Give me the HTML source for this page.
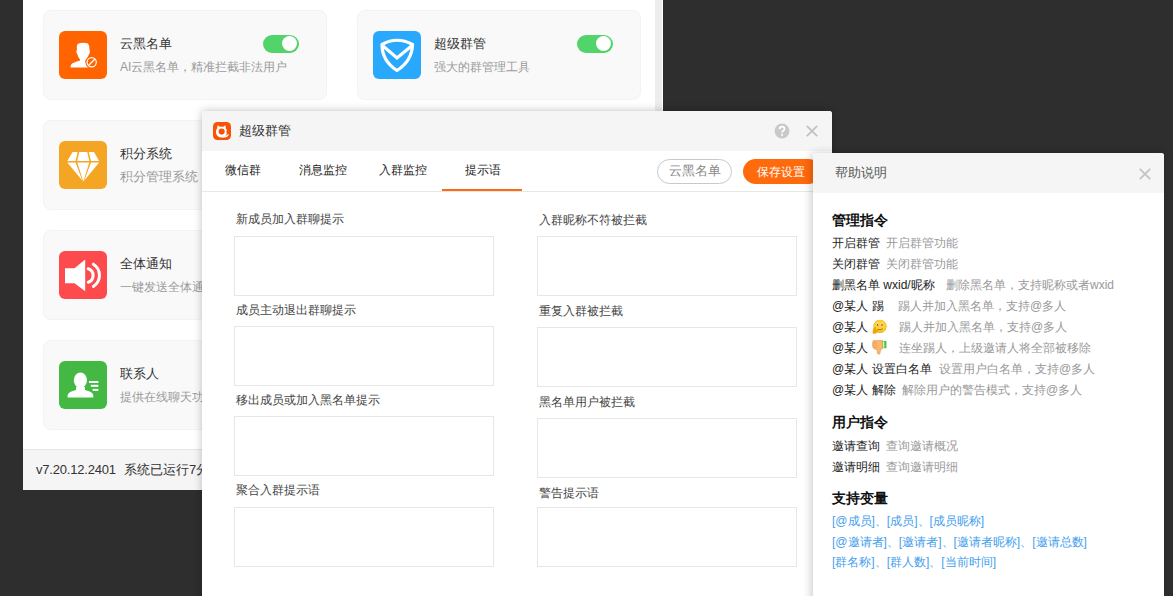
<!DOCTYPE html>
<html><head><meta charset="utf-8">
<style>
*{box-sizing:border-box;margin:0;padding:0}
html,body{width:1173px;height:596px;overflow:hidden}
body{background:#2e2e2e;font-family:"Liberation Sans",sans-serif;position:relative;color:#333}
.abs{position:absolute}
#main{left:23px;top:0;width:640px;height:490px;background:#fff}
#scroll{left:655px;top:0;width:7px;height:449px;background:#eeedeb}
#footer{left:23px;top:449px;width:640px;height:41px;background:#f5f5f5;border-top:1px solid #e6e6e6;font-size:13px;color:#333;padding-left:13px;line-height:40px;white-space:nowrap}
.card{position:absolute;width:284px;height:90px;background:#f9f9f9;border-radius:8px;border:1px solid #f3f3f3}
.card .ic{position:absolute;left:15px;top:20px;width:48px;height:48px;border-radius:6px}
.card .t{position:absolute;left:76px;top:23px;font-size:13px;color:#333;white-space:nowrap;line-height:20px}
.card .s{position:absolute;left:76px;top:47px;font-size:12px;color:#999;white-space:nowrap;line-height:18px}
.tg{position:absolute;left:219px;top:23.7px;width:36px;height:18px;border-radius:9px;background:#52d46a}
.tg:after{content:"";position:absolute;right:2.2px;top:1.5px;width:15px;height:15px;border-radius:50%;background:#fff}
#dlg{left:202px;top:111px;width:630px;height:500px;background:#fff;box-shadow:0 0 8px rgba(0,0,0,.25);border-radius:3px 3px 0 0}
#dtitle{left:0;top:0;width:630px;height:40px;background:#f5f5f5;border-radius:3px 3px 0 0}
#tabs{left:0;top:40px;width:630px;height:41px;border-bottom:1px solid #e8e8e8}
.tab{position:absolute;top:0;width:80px;height:40px;line-height:39px;text-align:center;font-size:12px;color:#1e1e1e}
.lbl{position:absolute;font-size:12px;color:#444;white-space:nowrap;line-height:16px}
.ta{position:absolute;width:260px;height:60px;border:1px solid #e6e6e6;background:#fff}
#help{left:813px;top:153px;width:351px;height:460px;background:#fff;box-shadow:-2px 0 8px rgba(0,0,0,.2);border-radius:3px 3px 0 0}
#hhead{left:0;top:0;width:351px;height:40px;border-radius:3px 3px 0 0;background:#f5f5f5;font-size:13px;color:#555;line-height:40px;padding-left:22px}
.hl{position:absolute;left:19px;font-size:12px;white-space:nowrap;line-height:16px;color:#222}
.hl i{font-style:normal;color:#999;position:absolute;top:0}
.hl{font-weight:500;margin-top:1px}
.hh{position:absolute;left:19px;font-size:14px;font-weight:bold;white-space:nowrap;line-height:18px;color:#111}
.bl{position:absolute;left:19px;font-size:12px;white-space:nowrap;line-height:16px;color:#45a0ee}
</style></head><body>
<div id="main" class="abs"></div>
<div id="scroll" class="abs"></div>
<div id="footer" class="abs"><span style="position:absolute;left:13px;letter-spacing:-0.2px">v7.20.12.2401</span><span style="position:absolute;left:101px">系统已运行7分钟</span></div>

<!-- cards -->
<div class="card" style="left:43px;top:10px">
  <div class="ic" style="background:#ff6400"><svg width="48" height="48" viewBox="0 0 48 48"><path d="M18.5,13 Q23.5,11 29,12.5 Q31,15 30.5,19 Q31.5,20 30.5,22.5 Q29.5,24 29,25.5 Q28,28 26.5,29 L26.5,31 Q28,32 29.5,33 L29.5,36.5 L11.5,36.5 Q11.5,33.5 13,32.5 Q17,30.5 21,29.5 L21,28.5 Q19,26.5 18.5,23.5 Q17.5,22.5 17.3,20.5 Q17.3,19 18,19 Q17.5,15 18.5,13 Z" fill="#fff"/><circle cx="32.7" cy="31.3" r="6.3" fill="#ff6400"/><circle cx="32.7" cy="31.3" r="4.6" fill="none" stroke="#fff" stroke-width="1.2"/><path d="M29.5,34.5 L36,28" stroke="#fff" stroke-width="1.2"/></svg></div>
  <div class="t">云黑名单</div><div class="s">AI云黑名单，精准拦截非法用户</div>
  <div class="tg"></div>
</div>
<div class="card" style="left:357px;top:10px">
  <div class="ic" style="background:#29a9fd"><svg width="48" height="48" viewBox="0 0 48 48"><path d="M9,13.5 Q24,5 39.5,13.5 Q39,30 24,39.5 Q9,30 9,13.5 Z" fill="none" stroke="#fff" stroke-width="3.2" stroke-linejoin="round"/><path d="M10,15 L24,27 L38.5,15" fill="none" stroke="#fff" stroke-width="3.2" stroke-linejoin="miter"/></svg></div>
  <div class="t">超级群管</div><div class="s">强大的群管理工具</div>
  <div class="tg"></div>
</div>
<div class="card" style="left:43px;top:120px">
  <div class="ic" style="background:#f5a524"><svg width="48" height="48" viewBox="0 0 48 48"><path d="M13.6,11 L18.6,11 L16.6,19.9 L8.3,19.9 Z M20.2,11 L28.2,11 L30.4,19.9 L18.2,19.9 Z M29.8,11 L35,11 L40.1,19.9 L32,19.9 Z M8.3,21.5 L16.6,21.5 L23.3,39.6 Z M18.3,21.5 L30.3,21.5 L24.3,40.8 Z M32,21.5 L40.1,21.5 L25.3,39.6 Z" fill="#fff"/></svg></div>
  <div class="t">积分系统</div><div class="s" style="font-size:12.5px">积分管理系统，</div>
</div>
<div class="card" style="left:43px;top:230px">
  <div class="ic" style="background:#fd4a4d"><svg width="48" height="48" viewBox="0 0 48 48"><path d="M6,17.2 L15.5,17.2 L26.2,8.6 L26.2,40.2 L15.5,32.2 L6,32.2 Z" fill="#fff"/><path d="M29.2,17.8 A7.1,7.1 0 0 1 29.2,31.3" fill="none" stroke="#fff" stroke-width="3" stroke-linecap="round"/><path d="M34.4,13.2 A13.2,13.2 0 0 1 34.4,35.4" fill="none" stroke="#fff" stroke-width="3" stroke-linecap="round"/></svg></div>
  <div class="t">全体通知</div><div class="s">一键发送全体通知</div>
</div>
<div class="card" style="left:43px;top:340px">
  <div class="ic" style="background:#43b843"><svg width="48" height="48" viewBox="0 0 48 48"><ellipse cx="21.4" cy="19.3" rx="6.6" ry="7.8" fill="#fff"/><path d="M17,26 L26,26 L26,29 Q33.5,30.5 34.3,34 L34.3,36.5 L8.6,36.5 L8.6,34 Q9.5,30.5 17,29 Z" fill="#fff"/><rect x="30" y="20" width="9.4" height="2" fill="#fff"/><rect x="31.8" y="23.8" width="7.6" height="2" fill="#fff"/><rect x="33.6" y="27.9" width="5.8" height="2" fill="#fff"/></svg></div>
  <div class="t">联系人</div><div class="s">提供在线聊天功能</div>
</div>

<!-- dialog -->
<div id="dlg" class="abs">
  <div id="dtitle" class="abs">
    <svg class="abs" style="left:11px;top:11px" width="18" height="18" viewBox="0 0 18 18"><rect width="18" height="18" rx="4.5" fill="#f95206"/><circle cx="8.5" cy="10" r="5.6" fill="#fff"/><path d="M3.9,7 L4.6,3.3 L7.6,5.2 Z M9.6,5.2 L12.4,3.3 L13,7 Z" fill="#fff"/><path d="M8.5,14.4 Q13,14.6 15.9,11.8 Q15.6,14.8 12,15.4 Q9.5,15.8 8.5,15 Z" fill="#fff"/><circle cx="8.65" cy="9.6" r="3.05" fill="#f95206"/><path d="M12.6,9.6 L14.6,9.2 L14.4,11.2 Z" fill="#f95206"/></svg>
    <div class="abs" style="left:37px;top:11px;font-size:13px;line-height:18px;color:#333">超级群管</div>
    <svg class="abs" style="left:572px;top:12px" width="16" height="16" viewBox="0 0 16 16"><circle cx="8" cy="8" r="7.4" fill="#c9c9c9"/><path d="M5.6,6.2 Q5.6,3.6 8,3.6 Q10.5,3.6 10.5,5.8 Q10.5,7.2 9,8 Q8.1,8.5 8.1,9.8" fill="none" stroke="#fff" stroke-width="1.8"/><rect x="7.1" y="10.9" width="1.9" height="1.8" fill="#fff"/></svg>
    <svg class="abs" style="left:604px;top:14px" width="12" height="12" viewBox="0 0 12 12"><path d="M0.8,0.8 L11.2,11.2 M11.2,0.8 L0.8,11.2" stroke="#c2c2c2" stroke-width="1.8"/></svg>
  </div>
  <div id="tabs" class="abs">
    <div class="tab" style="left:1px">微信群</div>
    <div class="tab" style="left:81px">消息监控</div>
    <div class="tab" style="left:161px">入群监控</div>
    <div class="tab" style="left:241px">提示语</div>
    <div class="abs" style="left:455px;top:8px;width:75px;height:25px;border:1px solid #c9c9c9;border-radius:13px;font-size:13px;color:#888;text-align:center;line-height:22px">云黑名单</div>
    <div class="abs" style="left:541px;top:8px;width:78px;height:25px;background:#ff6a0d;border-radius:13px;font-size:12px;color:#fff;padding-left:14px;line-height:26px">保存设置</div>
    <div class="abs" style="left:240px;top:38px;width:80px;height:2px;background:#ff6a13"></div>
  </div>
  <div class="lbl" style="left:34px;top:100px">新成员加入群聊提示</div>
  <div class="ta" style="left:32px;top:125px"></div>
  <div class="lbl" style="left:34px;top:191px">成员主动退出群聊提示</div>
  <div class="ta" style="left:32px;top:215px"></div>
  <div class="lbl" style="left:34px;top:281px">移出成员或加入黑名单提示</div>
  <div class="ta" style="left:32px;top:305px"></div>
  <div class="lbl" style="left:34px;top:371px">聚合入群提示语</div>
  <div class="ta" style="left:32px;top:396px"></div>

  <div class="lbl" style="left:337px;top:101px">入群昵称不符被拦截</div>
  <div class="ta" style="left:335px;top:125px"></div>
  <div class="lbl" style="left:337px;top:192px">重复入群被拦截</div>
  <div class="ta" style="left:335px;top:216px"></div>
  <div class="lbl" style="left:337px;top:283px">黑名单用户被拦截</div>
  <div class="ta" style="left:335px;top:307px"></div>
  <div class="lbl" style="left:337px;top:374px">警告提示语</div>
  <div class="ta" style="left:335px;top:396px"></div>
</div>

<!-- help -->
<div id="help" class="abs">
  <div id="hhead" class="abs">帮助说明</div>
  <svg class="abs" style="left:326px;top:15px" width="12" height="12" viewBox="0 0 12 12"><path d="M0.8,0.8 L11.2,11.2 M11.2,0.8 L0.8,11.2" stroke="#c4c4c4" stroke-width="1.9"/></svg>
  <div class="hh" style="top:58px">管理指令</div>
  <div class="hl" style="top:81px">开启群管<i style="left:54px">开启群管功能</i></div>
  <div class="hl" style="top:102px">关闭群管<i style="left:54px">关闭群管功能</i></div>
  <div class="hl" style="top:123px">删黑名单 wxid/昵称<i style="left:114px">删除黑名单，支持昵称或者wxid</i></div>
  <div class="hl" style="top:144px">@某人 踢<i style="left:66px">踢人并加入黑名单，支持@多人</i></div>
  <div class="hl" style="top:165px">@某人 <svg style="position:absolute;left:40px;top:0px" width="15" height="15" viewBox="0 0 15 15"><circle cx="8" cy="7.3" r="6.6" fill="#eea800"/><circle cx="8" cy="7.1" r="6" fill="#ffd23a"/><ellipse cx="5.3" cy="5.6" rx="1.3" ry="1.1" fill="#fff"/><ellipse cx="9.7" cy="5.6" rx="1.3" ry="1.1" fill="#fff"/><circle cx="5.5" cy="5.9" r="0.8" fill="#6a3a00"/><circle cx="9.9" cy="5.9" r="0.8" fill="#6a3a00"/><path d="M5.5,10.4 Q8.2,11.8 10.8,9.8" stroke="#8a5000" stroke-width="0.8" fill="none"/><path d="M0.6,14.6 L0.9,10.5 Q1.8,7.6 3.8,8 Q4.8,9 4.2,10.8 L6.6,11.3 Q6.2,14 3.2,14.7 Z" fill="#f2a400"/></svg><i style="left:67px">踢人并加入黑名单，支持@多人</i></div>
  <div class="hl" style="top:186px">@某人 <svg style="position:absolute;left:40px;top:0px" width="15" height="15" viewBox="0 0 15 15"><path d="M1.5,0.6 L10.6,0.6 L10.6,8.5 Q9,9 8.6,10 L7.9,13.8 Q6.6,14.9 5.5,13.5 L5,9.6 Q2.5,9.6 1.2,8 Q0.2,6 0.5,3.5 Q0.6,1 1.5,0.6 Z" fill="#fbb66c" stroke="#e08a38" stroke-width="0.5"/><path d="M1,3 L5,3 M1,5.3 L5,5.3 M1.5,7.5 L5,7.5" stroke="#e3954c" stroke-width="0.6"/><rect x="10.6" y="1" width="3.8" height="7.2" fill="#4cbf3c"/><rect x="11" y="1.5" width="1.3" height="6.2" fill="#d8f5cf"/></svg><i style="left:67px">连坐踢人，上级邀请人将全部被移除</i></div>
  <div class="hl" style="top:207px">@某人 设置白名单<i style="left:107px">设置用户白名单，支持@多人</i></div>
  <div class="hl" style="top:228px">@某人 解除<i style="left:70px">解除用户的警告模式，支持@多人</i></div>
  <div class="hh" style="top:260px">用户指令</div>
  <div class="hl" style="top:284px">邀请查询<i style="left:54px">查询邀请概况</i></div>
  <div class="hl" style="top:305px">邀请明细<i style="left:54px">查询邀请明细</i></div>
  <div class="hh" style="top:336px">支持变量</div>
  <div class="bl" style="top:360px">[@成员]、[成员]、[成员昵称]</div>
  <div class="bl" style="top:381px">[@邀请者]、[邀请者]、[邀请者昵称]、[邀请总数]</div>
  <div class="bl" style="top:401px">[群名称]、[群人数]、[当前时间]</div>
</div>
</body></html>
